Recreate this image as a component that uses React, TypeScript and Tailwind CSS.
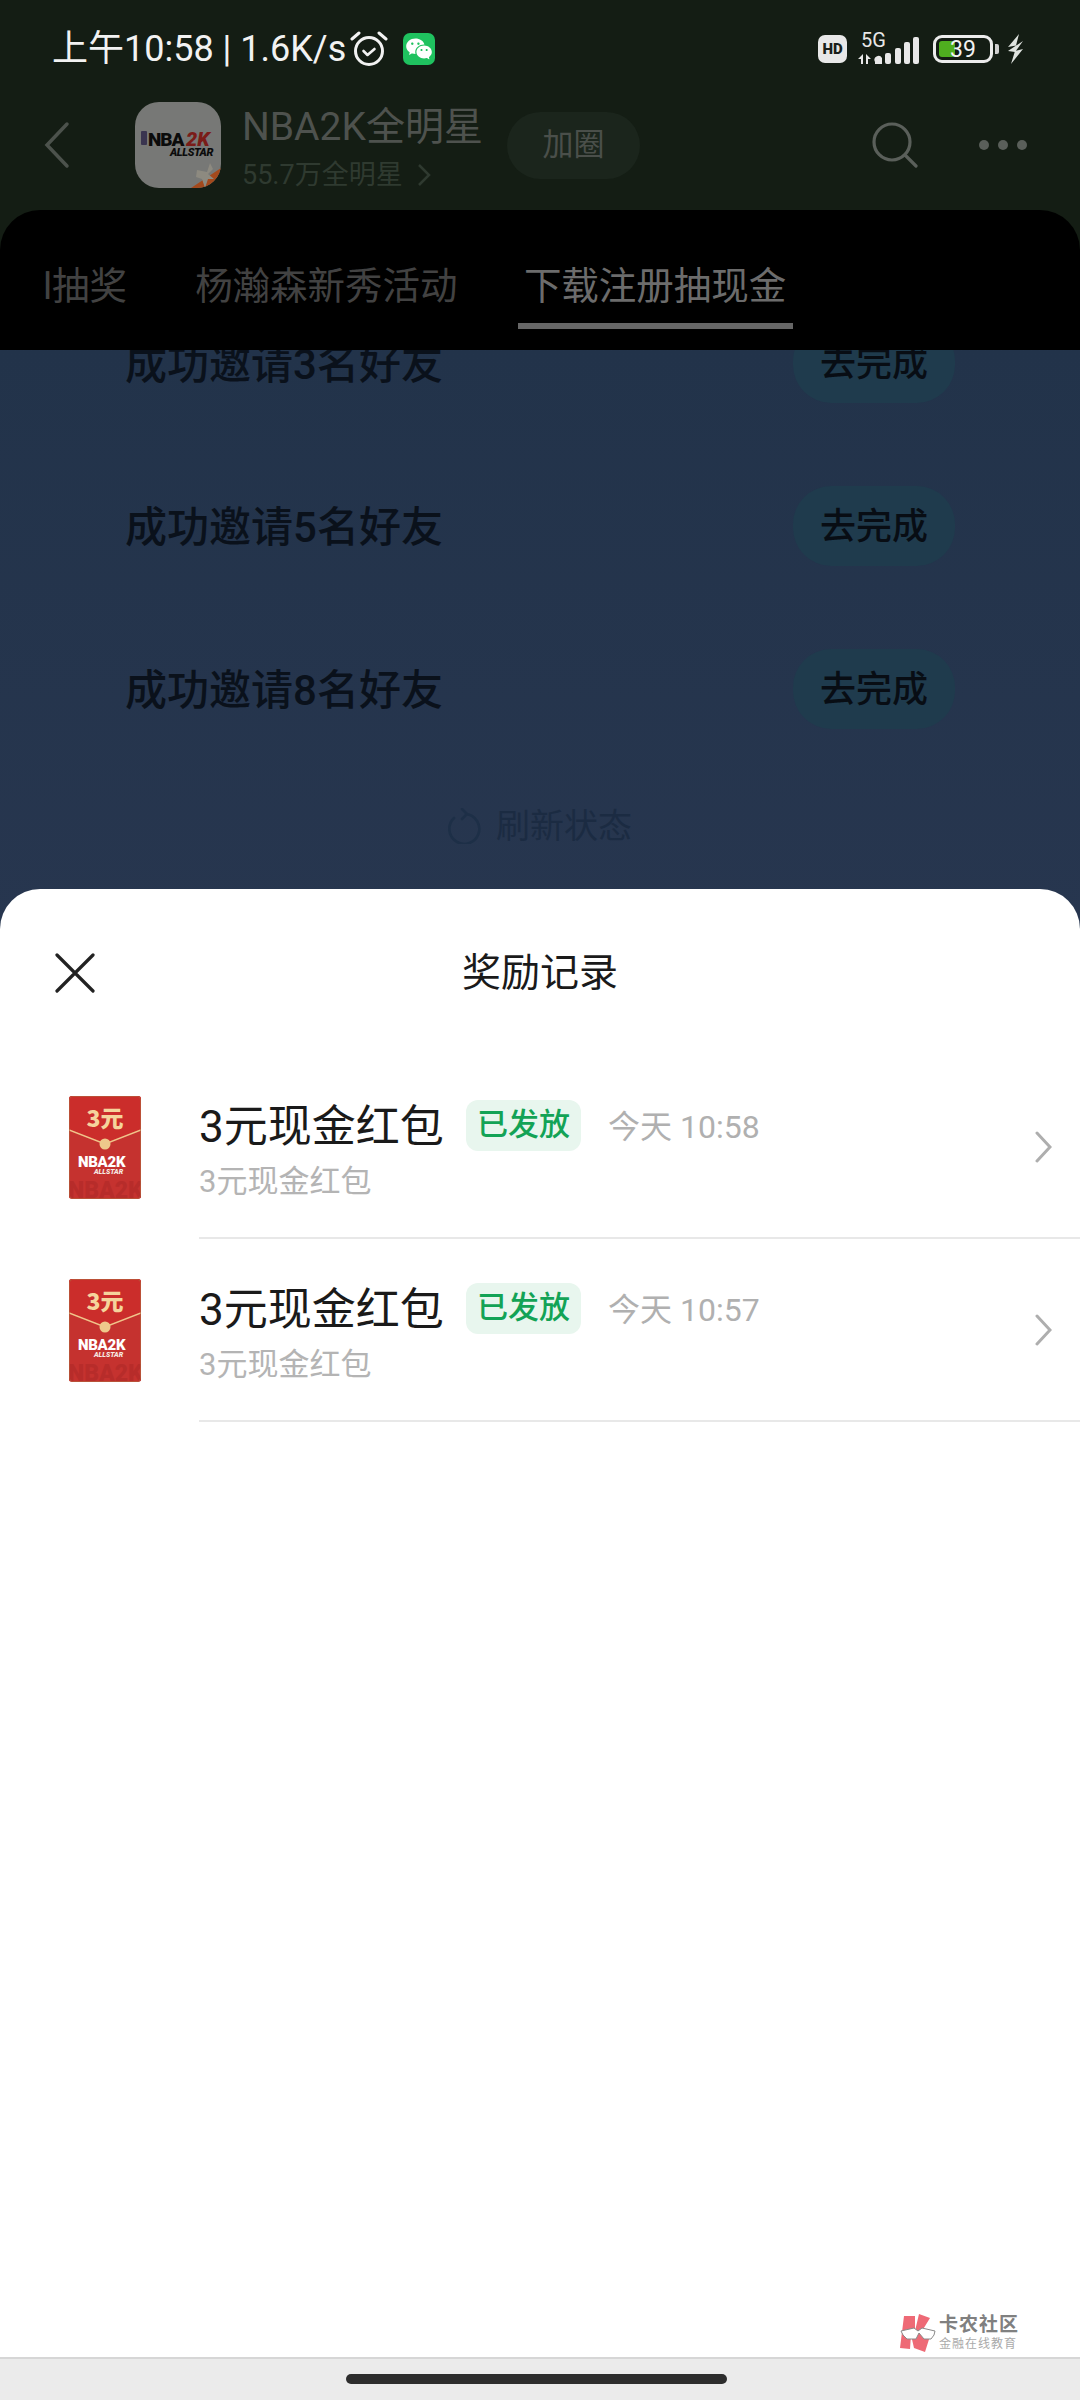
import { RiWechatFill } from "react-icons/ri"

const FONT = "font-['Roboto','Noto_Sans_CJK_SC',sans-serif]"

// Dimmed task rows behind the sheet
const tasks = [3, 5, 8]

const records = [
  { time: "今天 10:58" },
  { time: "今天 10:57" },
]

function AlarmIcon() {
  return (
    <svg width="38" height="36" viewBox="0 0 38 36" fill="none" stroke="#f2f2f2" strokeLinecap="round">
      <circle cx="19" cy="20" r="13.5" strokeWidth="3" />
      <path d="M13.5 20l4 4 7-6" strokeWidth="2.6" strokeLinejoin="round" />
      <path d="M2 8l7-6M36 8l-7-6" strokeWidth="3" />
    </svg>
  )
}

function SignalIcon() {
  return (
    <svg width="61" height="32" viewBox="0 0 61 32" fill="#e8e8e8">
      <path d="M0 26l5-5v10H3v-5zM8 21l5 5h-3v5H8z" />
      <path d="M17 31v-2a4 4 0 0 1 7-4v6z" />
      <rect x="27" y="20" width="6" height="11" rx="2" />
      <rect x="37" y="15" width="6" height="16" rx="2" />
      <rect x="46" y="9" width="6" height="22" rx="2" />
      <rect x="55" y="4" width="6" height="27" rx="2" />
    </svg>
  )
}

function BatteryIcon() {
  return (
    <div className="flex items-center gap-[2px]">
      <div className="relative h-[28px] w-[60px] rounded-[9px] border-[3px] border-[#ececec] p-[3px]">
        <div className="h-full w-[16px] rounded-[3px] bg-[#4fae1f]" />
        <span className="absolute inset-0 flex items-center justify-center text-[23px] leading-none text-[#f2f2f2]">39</span>
      </div>
      <div className="h-[10px] w-[4px] rounded-r-[2px] bg-[#cfcfcf]" />
    </div>
  )
}

function BoltIcon() {
  return (
    <svg width="17" height="30" viewBox="0 0 17 30" fill="#dfe3df">
      <path d="M12 0L1 13l8-1.5zM16 7L1 17l7 1zM16 15L8 17 4 30z" />
    </svg>
  )
}

function AppLogo() {
  return (
    <svg width="86" height="86" viewBox="0 0 86 86" className="shrink-0">
      <defs>
        <clipPath id="logoClip">
          <rect width="86" height="86" rx="24" />
        </clipPath>
      </defs>
      <g clipPath="url(#logoClip)">
        <rect width="86" height="86" fill="#777876" />
        <path d="M86 66L56 86h30z" fill="#a3491c" />
        <path d="M62 68l10 2 3-9 3 6-5 5 6 5-6 0-3 9-3-9-6-2z" fill="#8d8a80" />
        <rect x="6" y="29" width="6" height="14" rx="1" fill="#3a3550" />
        <text x="13" y="44" fontSize="19" fontWeight="900" fontFamily="Roboto" fill="#0b0b0b" letterSpacing="-1">NBA</text>
        <text x="51" y="44" fontSize="20" fontWeight="900" fontStyle="italic" fontFamily="Roboto" fill="#7a1c18">2K</text>
        <text x="35" y="54" fontSize="11" fontWeight="900" fontStyle="italic" fontFamily="Roboto" fill="#0b0b0b" letterSpacing="-0.4">ALLSTAR</text>
      </g>
    </svg>
  )
}

function RedPacket() {
  return (
    <svg width="72" height="103" viewBox="0 0 72 103" className="shrink-0">
      <defs>
        <clipPath id="packetClip">
          <rect width="72" height="103" rx="3" />
        </clipPath>
      </defs>
      <g clipPath="url(#packetClip)">
        <rect width="72" height="103" fill="#c5322f" />
        <path d="M0 0h72v34L36 48 0 34z" fill="#cb2d2b" />
        <path d="M0 34l36 14 36-14" fill="none" stroke="#f0c48a" strokeWidth="1.6" />
        <circle cx="36" cy="48" r="5.5" fill="#eec98b" />
        <text x="36" y="31" textAnchor="middle" fontSize="23" fontWeight="900" fontFamily="'Noto Sans CJK SC'" fill="#f5d49c">3元</text>
        <text x="9" y="71" fontSize="15" fontWeight="900" fontFamily="Roboto" fill="#fff" letterSpacing="-0.3">NBA2K</text>
        <text x="25" y="78" fontSize="7" fontWeight="900" fontStyle="italic" fontFamily="Roboto" fill="#f6e9e2">ALLSTAR</text>
        <text x="-1" y="102" fontSize="23" fontWeight="900" fontFamily="Roboto" fill="#b72c2a">NBA2K</text>
        <rect x="0.5" y="0.5" width="71" height="102" rx="3" fill="none" stroke="#b0683f" strokeOpacity="0.6" />
      </g>
    </svg>
  )
}

function Watermark() {
  return (
    <div className="absolute bottom-[5px] left-[900px] flex items-center gap-[3px]">
      <svg width="36" height="38" viewBox="0 0 36 38">
        <path d="M4 2h11v15l4-17 11 4-8 13 9 2-6 19-11-4-3-13-1 14-10-1z" fill="#ee6a76" />
        <path d="M1 17l13-3 4 3 4-3 13 3-1 4-3 4h-7l-5-6-3 6H7l-4-4z" fill="#fff" stroke="#8a8a8a" strokeWidth="1" />
      </svg>
      <div className="flex flex-col items-start">
        <span className="text-[19px] font-bold leading-[22px] tracking-[1px] text-[#808080]">卡农社区</span>
        <span className="text-[12px] leading-[16px] tracking-[1px] text-[#aaaaaa]">金融在线教育</span>
      </div>
    </div>
  )
}

export default function App() {
  return (
    <div className={`${FONT} flex h-[2400px] w-[1080px] flex-col overflow-hidden bg-[#141d14]`}>
      {/* Status bar */}
      <div className="flex h-[90px] items-center justify-between pl-[52px] pr-[56px] pt-[8px]">
        <div className="flex items-center">
          <span className="text-[36px] leading-[40px] text-[#f2f2f2]">上午10:58 | 1.6K/s</span>
          <span className="ml-[4px]"><AlarmIcon /></span>
          <span className="ml-[15px] flex h-[32px] w-[32px] items-center justify-center rounded-[7px] bg-[#1fc25f]">
            <RiWechatFill className="text-[28px] text-white" />
          </span>
        </div>
        <div className="flex items-center">
          <span className="flex h-[28px] w-[29px] items-center justify-center rounded-[7px] bg-[#e8e8e8] text-[15px] font-black text-[#1a1f1a]">HD</span>
          <div className="relative ml-[11px] h-[32px] w-[61px]">
            <SignalIcon />
            <span className="absolute left-[3px] top-[-3px] text-[20px] leading-[20px] text-[#e8e8e8]">5G</span>
          </div>
          <div className="ml-[14px]"><BatteryIcon /></div>
          <div className="ml-[8px]"><BoltIcon /></div>
        </div>
      </div>

      {/* Circle header */}
      <div className="flex h-[120px] shrink-0 items-center pb-[10px] pl-[44px] pr-[53px]">
        <svg width="26" height="48" viewBox="0 0 26 48" fill="none" stroke="#4c524c" strokeWidth="3.5" strokeLinecap="round">
          <path d="M23 3L3 24l20 21" />
        </svg>
        <div className="ml-[65px]"><AppLogo /></div>
        <div className="ml-[21px] flex w-[265px] flex-col pt-[5px]">
          <span className="text-[39px] leading-[44px] text-[#4e524e]">NBA2K全明星</span>
          <span className="mt-[10px] flex items-center text-[27px] leading-[32px] text-[#2f3a30]">
            55.7万全明星
            <svg width="14" height="24" viewBox="0 0 14 24" fill="none" stroke="#2f3a30" strokeWidth="2.5" className="ml-[14px]">
              <path d="M2 2l10 10L2 22" />
            </svg>
          </span>
        </div>
        <div className="flex h-[67px] w-[133px] items-center justify-center rounded-full bg-[#1b251c] text-[31px] text-[#4a4f4a]">加圈</div>
        <div className="flex-1" />
        <svg width="46" height="46" viewBox="0 0 46 46" fill="none" stroke="#5a5f5a" strokeWidth="3.2" strokeLinecap="round">
          <circle cx="20" cy="20" r="18" />
          <path d="M33 33l11 11" />
        </svg>
        <div className="ml-[61px] flex items-center gap-[9px]">
          <div className="h-[10px] w-[10px] rounded-full bg-[#5a5f5a]" />
          <div className="h-[10px] w-[10px] rounded-full bg-[#5a5f5a]" />
          <div className="h-[10px] w-[10px] rounded-full bg-[#5a5f5a]" />
        </div>
      </div>

      {/* Tabs */}
      <div className="relative z-10 flex h-[140px] shrink-0 items-start overflow-hidden rounded-t-[40px] bg-black pl-[43px] pt-[52px] text-[37.5px] leading-[48px] text-[#424242]">
        <span className="whitespace-nowrap">l抽奖</span>
        <span className="ml-[68px] whitespace-nowrap">杨瀚森新秀活动</span>
        <div className="ml-[60px] flex flex-col items-center whitespace-nowrap text-[#6c6c6c]">
          <span>下载注册抽现金</span>
          <div className="mt-[13px] h-[6px] w-[275px] bg-[#666666]" />
        </div>
      </div>

      {/* Task list behind the sheet */}
      <div className="h-[579px] shrink-0 overflow-hidden bg-gradient-to-b from-[#22334a] to-[#27364f] px-[125px]">
        <div className="-mt-[27px] flex flex-col gap-[83px]">
          {tasks.map((n) => (
            <div key={n} className="flex h-[80px] items-center justify-between">
              <span className="pt-[3px] text-[42px] font-medium text-[#0a111b]">成功邀请{n}名好友</span>
              <span className="flex h-[80px] w-[162px] items-center justify-center rounded-[38px] bg-[#1f3b4d] pt-[1px] text-[36px] font-medium text-[#080d14]">去完成</span>
            </div>
          ))}
        </div>
        <div className="mt-[77px] flex items-center justify-center gap-[14px] text-[34px] leading-[40px] text-[#1b2b42]">
          <svg width="34" height="36" viewBox="0 0 34 36" fill="none" stroke="#1d2f47" strokeWidth="2.6" strokeLinecap="round" strokeLinejoin="round">
            <path d="M6 10a15 15 0 1 0 12-4M14 1l5 5-5 5" />
          </svg>
          <span>刷新状态</span>
        </div>
      </div>

      {/* Reward sheet */}
      <div className="relative -mt-[40px] flex flex-1 flex-col rounded-t-[40px] bg-white">
        <div className="grid h-[167px] shrink-0 grid-cols-[1fr_auto_1fr] items-center">
          <svg width="40" height="40" viewBox="0 0 40 40" fill="none" stroke="#222222" strokeWidth="3.2" strokeLinecap="round" className="ml-[55px]">
            <path d="M2 2l36 36M38 2L2 38" />
          </svg>
          <span className="text-[39px] leading-[48px] text-[#1a1a1a]">奖励记录</span>
        </div>

        {records.map((r) => (
          <div key={r.time} className="flex h-[183px] shrink-0 items-center pl-[69px]">
            <RedPacket />
            <div className="ml-[58px] flex h-full flex-1 items-center justify-between border-b-2 border-[#e8e8e8] pr-[28px]">
              <div className="flex flex-col self-start pt-[44px]">
                <div className="flex items-center">
                  <span className="w-[267px] text-[44px] leading-[52px] text-[#1a1a1a]">3元现金红包</span>
                  <span className="mb-[2px] flex h-[51px] w-[115px] items-center justify-center rounded-[12px] bg-[#e8f6ee] text-[31px] font-medium text-[#13a356]">已发放</span>
                  <span className="ml-[27px] text-[32px] leading-[40px] text-[#b0b0b0]">{r.time}</span>
                </div>
                <span className="mt-[8px] text-[31px] leading-[42px] text-[#b4b4b4]">3元现金红包</span>
              </div>
              <svg width="17" height="32" viewBox="0 0 17 32" fill="none" stroke="#aeaeae" strokeWidth="3" strokeLinecap="round">
                <path d="M2 2l13 14L2 30" />
              </svg>
            </div>
          </div>
        ))}

        <Watermark />
      </div>

      {/* Gesture bar */}
      <div className="flex h-[43px] shrink-0 items-start justify-center border-t-2 border-[#d6d6d6] bg-[#ebebeb] pr-[7px] pt-[15px]">
        <div className="h-[10px] w-[381px] rounded-full bg-[#2d2d2d]" />
      </div>
    </div>
  )
}
